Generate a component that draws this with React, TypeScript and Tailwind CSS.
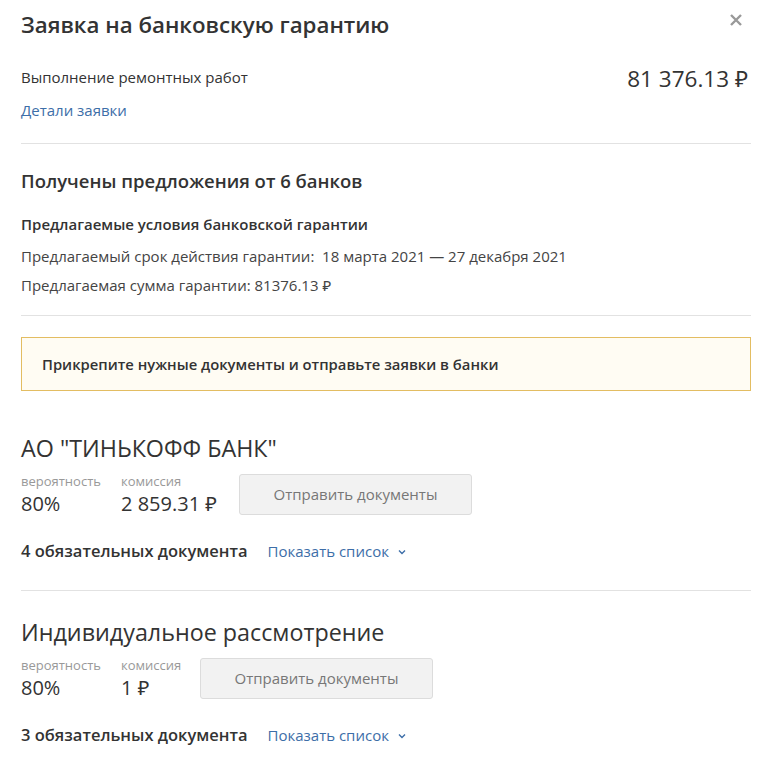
import React from 'react';

const font = { fontFamily: '"Open Sans", "Noto Sans", sans-serif' };

function Chevron() {
  return (
    <svg width="10" height="10" viewBox="0 0 10 10" className="ml-2 mt-0.5">
      <path d="M2 3.5 L5 6.5 L8 3.5" fill="none" stroke="#3d6ea8" strokeWidth="1.4" />
    </svg>
  );
}

interface OfferProps {
  bank: string;
  commission: string;
  docs: string;
  commissionWidth: string;
}

function Offer({ bank, commission, docs, commissionWidth }: OfferProps) {
  return (
    <div>
      <h3 className="text-[23.3px] leading-[30px] text-[#333]">{bank}</h3>
      <div className="flex items-start mt-[10px]">
        <div className="w-[100px]">
          <div className="text-[13px] leading-[16px] text-[#999]">вероятность</div>
          <div className="text-[20px] leading-[26px] text-[#333] mt-[2px]">80%</div>
        </div>
        <div className={commissionWidth}>
          <div className="text-[13px] leading-[16px] text-[#999]">комиссия</div>
          <div className="text-[20px] leading-[26px] text-[#333] mt-[2px]">{commission}</div>
        </div>
        <button className="w-[233px] h-[41px] mt-[1px] rounded-[3px] border border-[#dcdcdc] bg-[#f2f2f2] text-[15px] text-[#777]">
          Отправить документы
        </button>
      </div>
      <div className="flex items-center mt-[22px]">
        <span className="text-[16.5px] font-semibold text-[#333]">{docs}</span>
        <span className="ml-5 flex items-center text-[15px] text-[#3d6ea8]">
          Показать список
          <Chevron />
        </span>
      </div>
    </div>
  );
}

export default function App() {
  return (
    <div style={font} className="w-[777px] h-[773px] bg-white pl-[21px] pr-[26px] overflow-hidden">
      <div className="flex justify-between items-start pt-[9px]">
        <h1 className="text-[22.3px] leading-[32px] font-semibold text-[#333]">Заявка на банковскую гарантию</h1>
        <button className="mt-[4px] mr-[8px] text-[#999]">
          <svg width="14" height="14" viewBox="0 0 14 14">
            <path d="M2 2 L12 12 M12 2 L2 12" stroke="#999" strokeWidth="2.4" />
          </svg>
        </button>
      </div>

      <div className="flex justify-between items-start mt-[25px]">
        <div>
          <div className="text-[15px] leading-[22px] text-[#333]">Выполнение ремонтных работ</div>
          <div className="text-[15px] leading-[22px] text-[#3d6ea8] mt-[11px]">Детали заявки</div>
        </div>
        <div className="text-[22.5px] leading-[30px] text-[#333] mr-[3px] -mt-[2px]">81 376.13 ₽</div>
      </div>

      <div className="border-t border-[#e2e2e2] mt-[22px]" />

      <div className="pt-[25px] pb-[20px]">
        <h2 className="text-[18.5px] leading-[24px] font-semibold text-[#333]">Получены предложения от 6 банков</h2>
        <div className="text-[15px] leading-[20px] font-semibold text-[#333] mt-[21px]">
          Предлагаемые условия банковской гарантии
        </div>
        <div className="text-[15px] leading-[20px] text-[#444] mt-[12px]">
          Предлагаемый срок действия гарантии:&nbsp; 18 марта 2021 — 27 декабря 2021
        </div>
        <div className="text-[15px] leading-[20px] text-[#444] mt-[9px]">Предлагаемая сумма гарантии: 81376.13 ₽</div>
      </div>

      <div className="border-t border-[#e2e2e2]" />

      <div className="mt-[21px] h-[54px] border border-[#e3bd62] bg-[#fffcf3] flex items-center pl-[20px]">
        <span className="text-[14.8px] font-semibold text-[#333]">Прикрепите нужные документы и отправьте заявки в банки</span>
      </div>

      <div className="mt-[42px]">
        <Offer bank={'АО "ТИНЬКОФФ БАНК"'} commission="2 859.31 ₽" docs="4 обязательных документа" commissionWidth="w-[118px]" />
      </div>

      <div className="border-t border-[#e2e2e2] mt-[26px]" />

      <div className="mt-[26px]">
        <Offer bank="Индивидуальное рассмотрение" commission="1 ₽" docs="3 обязательных документа" commissionWidth="w-[79px]" />
      </div>
    </div>
  );
}
